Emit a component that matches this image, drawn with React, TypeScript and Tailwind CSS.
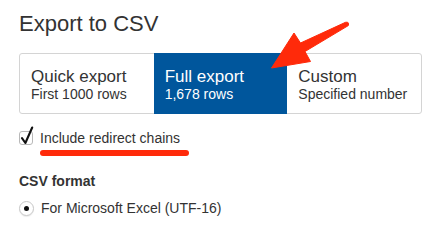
const OPTIONS = [
  { title: "Quick export", detail: "First 1000 rows", active: false },
  { title: "Full export", detail: "1,678 rows", active: true },
  { title: "Custom", detail: "Specified number", active: false },
] as const;

function Arrow() {
  return (
    <svg
      className="pointer-events-none absolute left-0 top-0"
      width={440}
      height={223}
      viewBox="0 0 440 223"
    >
      <path
        d="M271.5 68 L294 33 L300.5 43 L345.5 22.3 Q349.5 21.5 348.3 25.6 L305 51.5 L310.5 61.5 Z"
        fill="#ff2a0a"
        stroke="#ff2a0a"
        strokeWidth={1}
        strokeLinejoin="round"
      />
    </svg>
  );
}

export default function App() {
  return (
    <div className="relative h-[223px] w-[440px] overflow-hidden bg-white pl-[19px] pt-[10px] font-['Liberation_Sans',Arial,sans-serif] text-[#333]">
      <h1 className="text-[22px] leading-[28px]">Export to CSV</h1>

      <div className="mt-[15px] grid w-[403px] grid-cols-3 rounded-[3px] border border-[#d4d4d4]">
        {OPTIONS.map((option) => (
          <div
            key={option.title}
            className={
              option.active
                ? "-my-px bg-[#00569c] pb-[12px] pl-[11px] pt-[14px] text-white"
                : "pb-[11px] pl-[11px] pt-[13px]"
            }
          >
            <p className="text-[17px] leading-[19px]">{option.title}</p>
            <p className="text-[14px] leading-[16px]">{option.detail}</p>
          </div>
        ))}
      </div>

      <label className="mt-[16px] flex h-[16px] items-center text-[14px] leading-[16px]">
        <span className="relative h-[14px] w-[14px] rounded-[3px] border border-[#b8b8b8] bg-white">
          <svg
            className="absolute -top-[6px] left-0"
            width={16}
            height={20}
            viewBox="0 0 16 20"
          >
            <path
              d="M2 12.2 L5.4 17 L12.2 1.5"
              fill="none"
              stroke="#111"
              strokeWidth={2.1}
              strokeLinecap="round"
              strokeLinejoin="round"
            />
          </svg>
        </span>
        <span className="ml-[7px]">Include redirect chains</span>
      </label>
      <div className="ml-[21px] mt-[4px] h-[6px] w-[149px] rounded-full bg-[#ff2a0a]" />

      <p className="mt-[17px] text-[14px] font-bold leading-[16px]">CSV format</p>

      <div className="mt-[11px] flex h-[16px] items-center text-[14px] leading-[16px]">
        <span className="flex h-[15px] w-[15px] items-center justify-center rounded-full border border-[#c8c8c8] bg-white shadow-[0_1px_1px_rgba(0,0,0,0.08)]">
          <span className="h-[5px] w-[5px] rounded-full bg-[#111]" />
        </span>
        <span className="ml-[7px]">For Microsoft Excel (UTF-16)</span>
      </div>

      <Arrow />
    </div>
  );
}
